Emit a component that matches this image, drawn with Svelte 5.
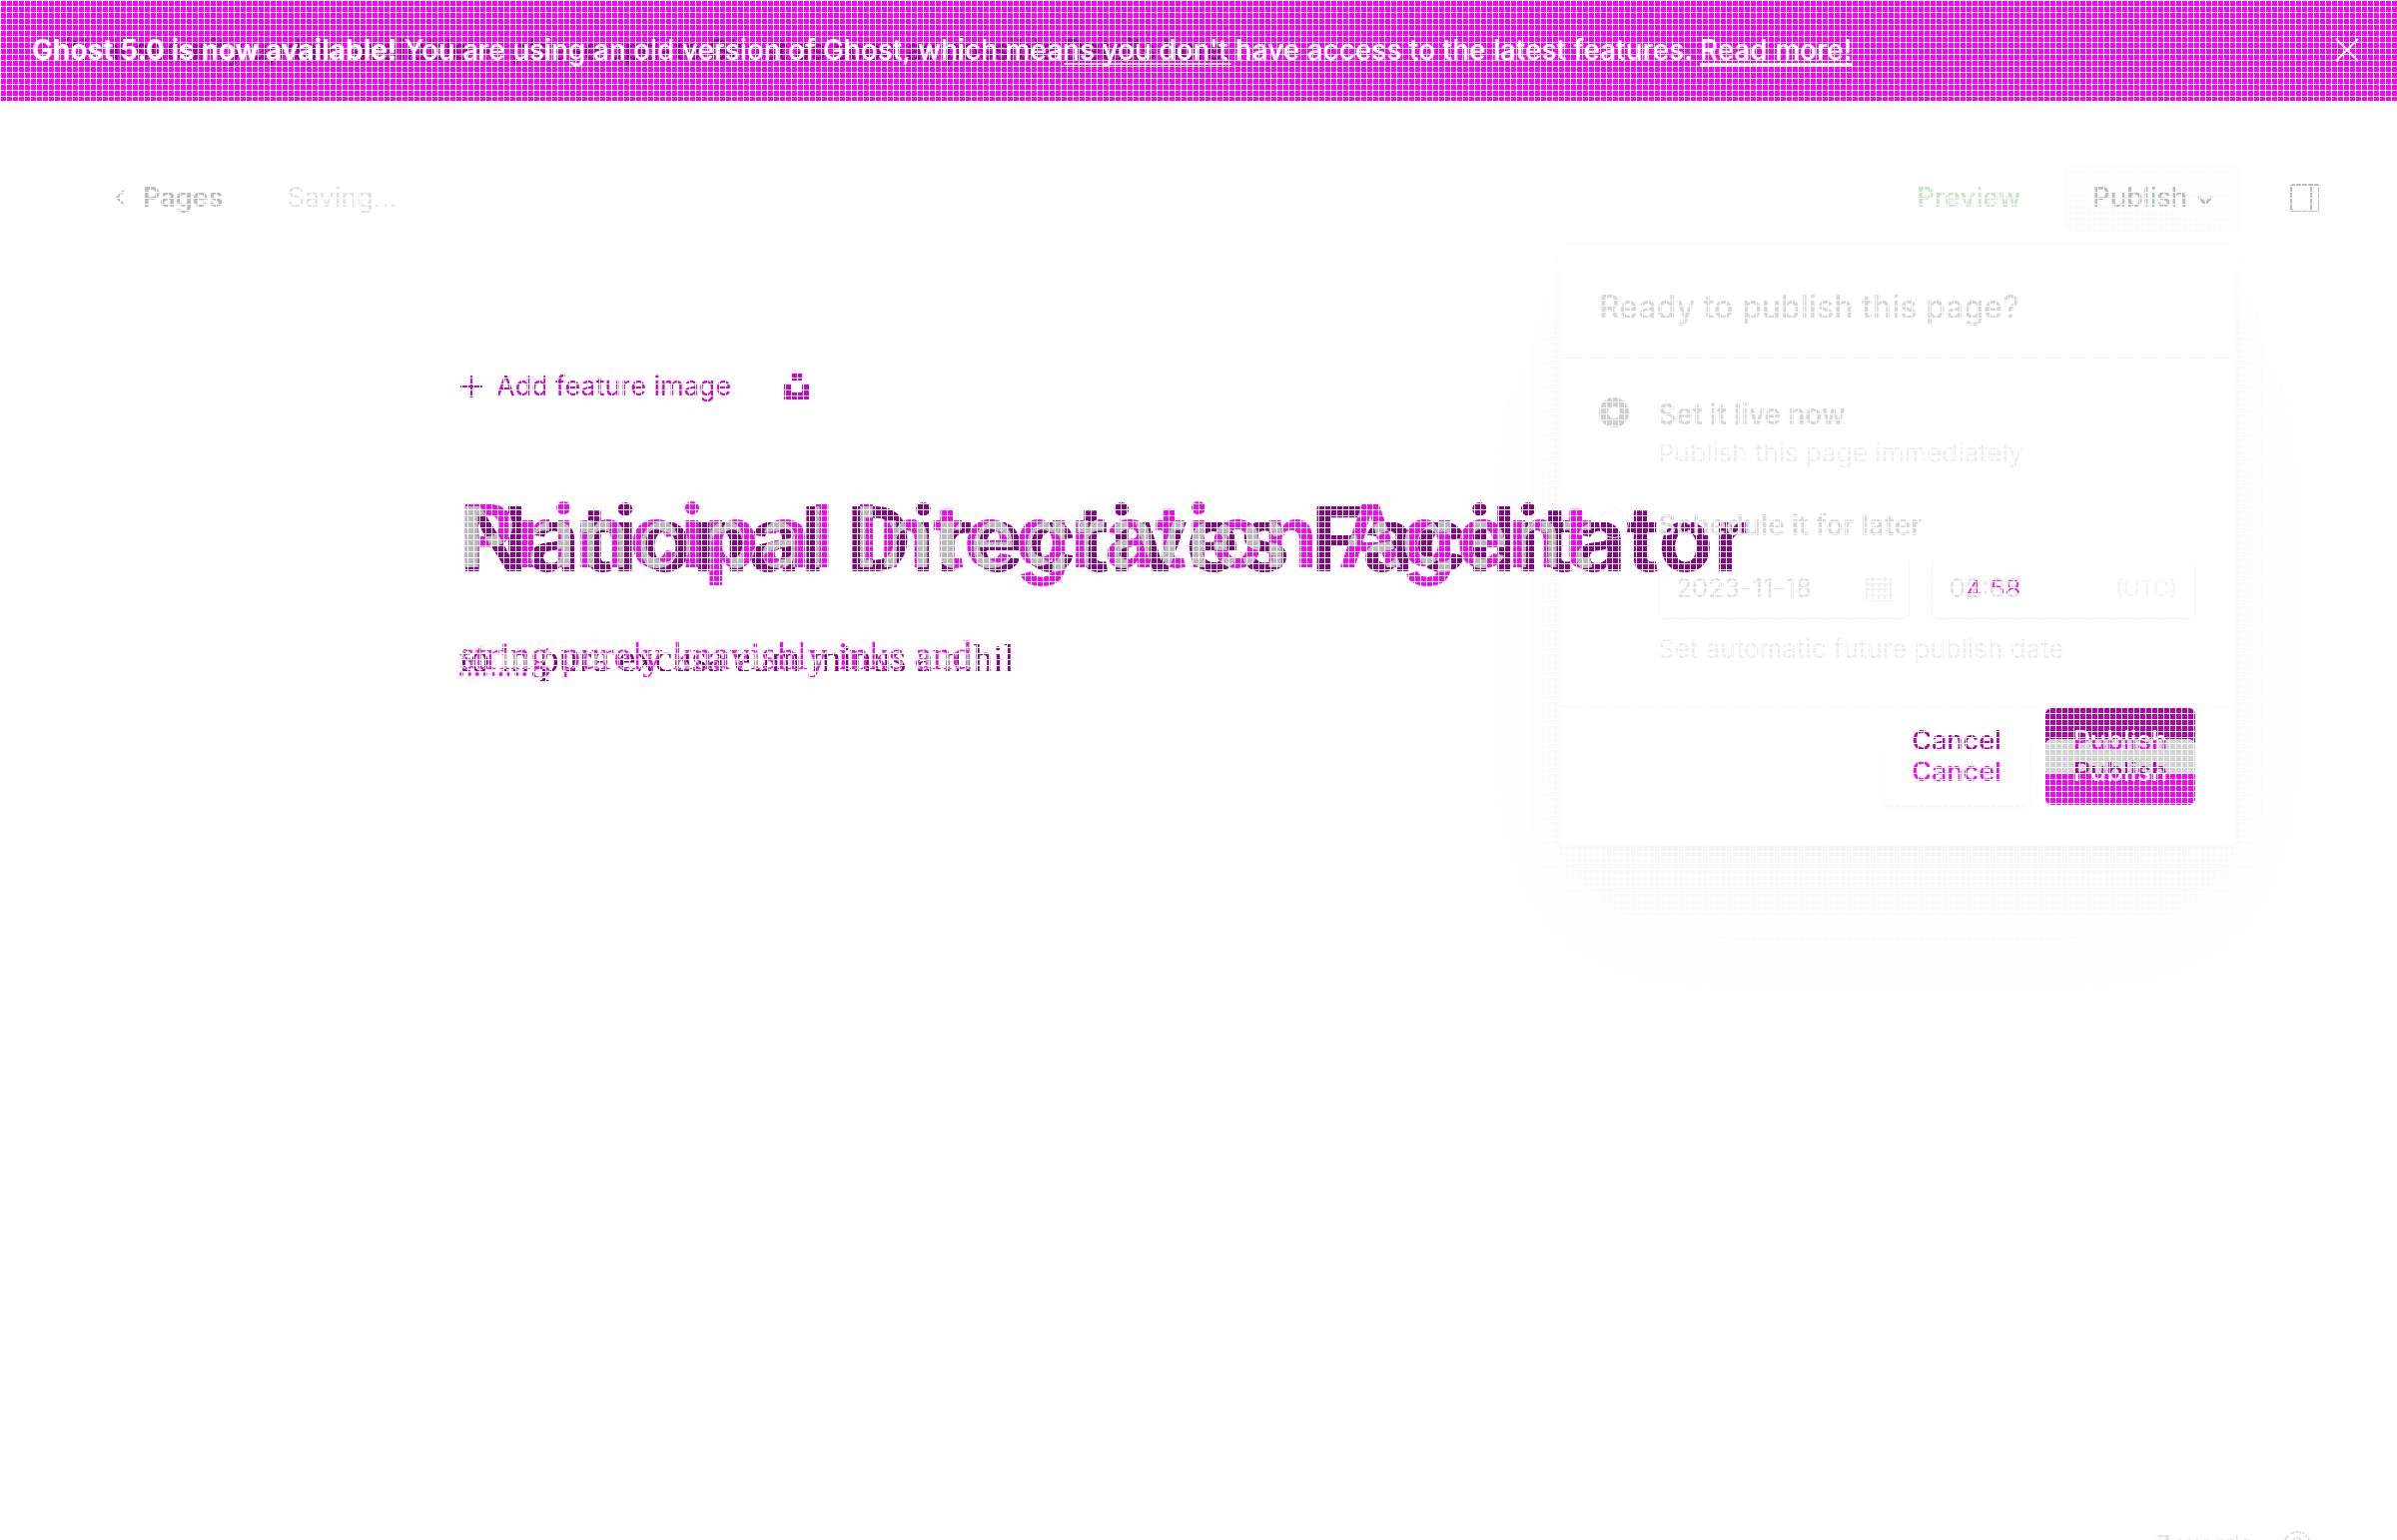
<script>
  let when = $state('now');
</script>

{#snippet overlap(former, current, flagged = '')}
  <span class="current"><span class="flagged">{flagged}</span>{current}</span>
  <span class="former" aria-hidden="true">{former}</span>
  <span class="shared" aria-hidden="true">
    <span class="shared-a">{flagged}{current}</span>
    <span class="shared-b">{former}</span>
  </span>
{/snippet}

<div class="page">
  <div class="banner">
    <div class="messages">
      <p class="old" aria-hidden="true">Critical security update available — please update Ghost as soon as possible <u>Details here.</u></p>
      <p><b>Ghost 5.0 is now available!</b> You are using an old version of Ghost, which means you don't have access to the latest features. <a href="#more">Read more!</a></p>
    </div>
    <button class="close" aria-label="Close">
      <svg width="24" height="24" viewBox="0 0 24 24"><path d="M1 1l22 22M23 1L1 23" /></svg>
    </button>
  </div>

  <header>
    <a class="back" href="#pages">
      <svg width="12" height="18" viewBox="0 0 12 18"><path d="M10 2L3 9l7 7" /></svg>Pages
    </a>
    <span class="saving">Saving...</span>
    <div class="actions">
      <a class="preview" href="#preview">Preview</a>
      <div class="publish-wrap">
        <button class="publish-toggle">Publish
          <svg width="18" height="12" viewBox="0 0 18 12"><path d="M2 2l7 7 7-7" /></svg>
        </button>
        <section class="modal">
          <h2>Ready to publish this page?</h2>
          <div class="options">
            <label class="option">
              <input type="radio" value="now" bind:group={when} />
              <span class="words"><strong>Set it live now</strong><small>Publish this page immediately</small></span>
            </label>
            <label class="option later">
              <input type="radio" value="later" bind:group={when} />
              <span class="words"><strong>Schedule it for later</strong></span>
            </label>
            <div class="fields">
              <div class="field">
                <input aria-label="Date" value="2023-11-18" />
                <svg width="26" height="26" viewBox="0 0 26 26"><path d="M1 4h24v21H1zM1 9h24M1 14h24M1 19h24M7 9v16M13 9v16M19 9v16M7 1v5M19 1v5" /></svg>
              </div>
              <div class="field">
                <input aria-label="Time" value="02:03" />
                <span class="change" aria-hidden="true">4 58</span>
                <span class="zone">(UTC)</span>
              </div>
            </div>
            <small class="note">Set automatic future publish date</small>
          </div>
          <footer>
            <button class="cancel"><span class="ghost-label" aria-hidden="true">Cancel</span>Cancel</button>
            <div class="confirm-wrap">
              <div class="confirm-former" aria-hidden="true"></div>
              <button class="confirm"><span class="ghost-label" aria-hidden="true">Publish</span><span class="label">Publish</span></button>
            </div>
          </footer>
        </section>
      </div>
      <button class="panel" aria-label="Settings">
        <svg width="30" height="28" viewBox="0 0 30 28"><path d="M3 1h24q2 0 2 2v22q0 2-2 2H3q-2 0-2-2V3q0-2 2-2zM21 1v26" /></svg>
      </button>
    </div>
  </header>

  <main>
    <div class="feature">
      <button><svg width="24" height="24" viewBox="0 0 24 24"><path d="M12 1v22M1 12h22" /></svg>Add feature image</button>
      <button aria-label="Unsplash"><svg class="solid" width="28" height="28" viewBox="0 0 28 28"><path d="M9 1h10v7H9zM1 12h8v8h10v-8h8v15H1z" /></svg></button>
    </div>
    <h1 class="stack">{@render overlap('National Directives Facilitator', 'Principal Integration Agent')}</h1>
    <p class="stack body">{@render overlap('to in pure excusa eum minus a nihil', ' purely knavishly inks and', 'string')}</p>
  </main>

  <div class="status">
    <span>7 words</span>
    <svg width="28" height="28" viewBox="0 0 28 28"><circle cx="14" cy="14" r="13" /><path d="M10 11q0-4 4-4t4 4q0 2-4 4v3" /></svg>
  </div>
</div>

<style>
  :global(body) { margin: 0; overflow: hidden; }
  * { box-sizing: border-box; }
  .page { position: relative; height: 100vh; overflow: hidden; background: #fff; font: 27px/36px Inter, sans-serif; color: #bcbcbc; }
  .page::after {
    content: ''; position: absolute; inset: 0; z-index: 9; pointer-events: none;
    background: repeating-linear-gradient(90deg, #fff 0 1px, transparent 1px 6px), repeating-linear-gradient(#fff 0 1px, transparent 1px 6px);
  }
  button { border: 0; padding: 0; background: none; color: inherit; font: inherit; }
  a { color: inherit; text-decoration: none; }
  p, h1, h2 { margin: 0; }
  svg { fill: none; stroke: currentColor; stroke-width: 2; flex: none; }

  .banner { display: flex; align-items: center; justify-content: space-between; height: 101px; padding: 0 38px 1px 32px; background: #f0f; color: #fff; font-size: 28px; font-weight: 500; white-space: nowrap; }
  .messages { display: grid; }
  .messages p { grid-area: 1 / 1; }
  .messages b { font-weight: 700; }
  .messages a { text-decoration: underline; text-decoration-thickness: 3px; text-underline-offset: 3px; }
  .messages .old { color: #9b009b; }
  .old u { text-decoration: underline #ded8de 2px; text-underline-offset: 3px; }
  .close { display: flex; }
  .close svg { stroke-width: 2; }

  header { display: flex; align-items: center; height: 68px; margin: 63px 77px 0 114px; font-weight: 500; }
  .back { display: flex; align-items: center; gap: 17px; font-weight: 600; }
  .saving { margin-left: 64px; color: #dfe1e6; font-weight: 400; }
  .actions { display: flex; align-items: center; margin-left: auto; }
  .preview { color: #c9e7c5; margin-right: 44px; font-weight: 600; }
  .publish-wrap { position: relative; margin-right: 50px; }
  .publish-toggle { display: flex; align-items: center; gap: 9px; height: 68px; padding: 0 26px 0 28px; border-radius: 8px; background: #fcfcfc; }
  .publish-toggle svg { stroke-width: 3; margin-top: 5px; }
  .panel { display: flex; }

  .modal { position: absolute; z-index: 2; top: 82px; right: 5px; width: 676px; border-radius: 6px; color: #d7d7d7; font-weight: 400; box-shadow: 0 0 14px rgb(0 0 0 / 2%), 0 40px 70px rgb(0 0 0 / 2%), 0 80px 200px 40px rgb(0 0 0 / 2%); }
  h2 { padding: 41px 39px 29px; border-bottom: 1px solid #f5f5f5; font-size: 32px; font-weight: 500; line-height: 42px; }
  .options { padding: 37px 40px 37px 39px; height: 349px; border-bottom: 1px solid #f6f6f6; }
  .option { display: flex; gap: 29px; }
  .words { display: grid; }
  strong { font-size: 28px; font-weight: 600; line-height: 39px; }
  small { font-size: 26px; line-height: 38px; color: #ececec; }
  input[type='radio'] { appearance: none; width: 30px; height: 30px; margin: 2px 0 0; border: 1px solid #f2f2f2; border-radius: 50%; }
  input[type='radio']:checked { border: 9px solid #ced0d0; }
  .later { margin-top: 34px; }
  .fields { display: flex; gap: 22px; margin: 12px 0 11px 59px; }
  .field { position: relative; display: flex; flex: 265; min-width: 0; align-items: center; height: 62px; padding: 0 17px; border: 1px solid #f3f3f3; border-radius: 6px; }
  .field:first-child { flex: 250; }
  .field input { flex: 1; width: 0; min-width: 0; border: 0; padding: 0; background: none; color: #dedede; font: inherit; font-size: 26px; outline: 0; }
  .field svg { stroke: #f0f0f0; }
  .zone { color: #f1f1f1; font-size: 22px; }
  .change { position: absolute; left: 34px; top: 17px; font-size: 26px; line-height: 28px; font-weight: 300; color: #f0f; clip-path: inset(5px 0 9px 0); }
  .note { display: block; margin-left: 59px; }

  footer { display: flex; gap: 16px; justify-content: flex-end; padding: 32px 40px 41px; font-weight: 500; }
  .cancel { position: relative; width: 146px; height: 66px; border-radius: 6px; color: #f0f; box-shadow: 0 2px 4px rgb(0 0 0 / 6%); }
  .ghost-label { position: absolute; left: 0; right: 0; top: -16px; color: #b300b3; }
  .confirm-wrap { position: relative; width: 150px; height: 66px; }
  .confirm-former { position: absolute; inset: -31px 0 32px; border-radius: 6px; background: #b300b3; }
  .confirm { position: relative; width: 100%; height: 66px; border-radius: 6px; background: linear-gradient(#d2d2d2 34px, #f0f 34px); }
  .confirm .ghost-label { background: linear-gradient(#fff 17px, #f0f 17px); background-clip: text; color: transparent; }
  .label { background: linear-gradient(#b300b3 19px, #fff 19px); background-clip: text; color: transparent; }

  main { padding: 137px 460px 0; }
  .feature { display: flex; gap: 52px; height: 36px; color: #d000d0; font-weight: 400; }
  .feature button { display: flex; align-items: center; gap: 13px; }
  .solid { fill: currentColor; stroke: none; }
  .stack { position: relative; display: grid; isolation: isolate; background: #fff; white-space: nowrap; }
  .stack > span, .shared > span { grid-area: 1 / 1; }
  .current { color: #f0f; }
  .former { color: #8b008b; }
  .former, .shared-b { padding-top: 3px; }
  .shared { display: grid; isolation: isolate; background: #000; mix-blend-mode: screen; }
  .shared-a { color: #65b965; background: #000; }
  .shared-b { color: #fff; background: #000; mix-blend-mode: multiply; }
  h1 { margin-top: 78px; font-size: 90px; line-height: 108px; font-weight: 700; }
  h1 .current, h1 .shared-a { font-size: 87px; }
  .body { margin-top: 38px; font: 39px/50px 'Liberation Serif', serif; }
  .body .current, .body .shared-a { font-size: 40px; }
  .body .flagged { text-decoration: underline dotted 4px; text-underline-offset: 3px; }

  .status { position: absolute; right: 86px; bottom: -19px; display: flex; align-items: center; gap: 30px; color: #dfe1e6; font-size: 26px; line-height: 28px; }
</style>
